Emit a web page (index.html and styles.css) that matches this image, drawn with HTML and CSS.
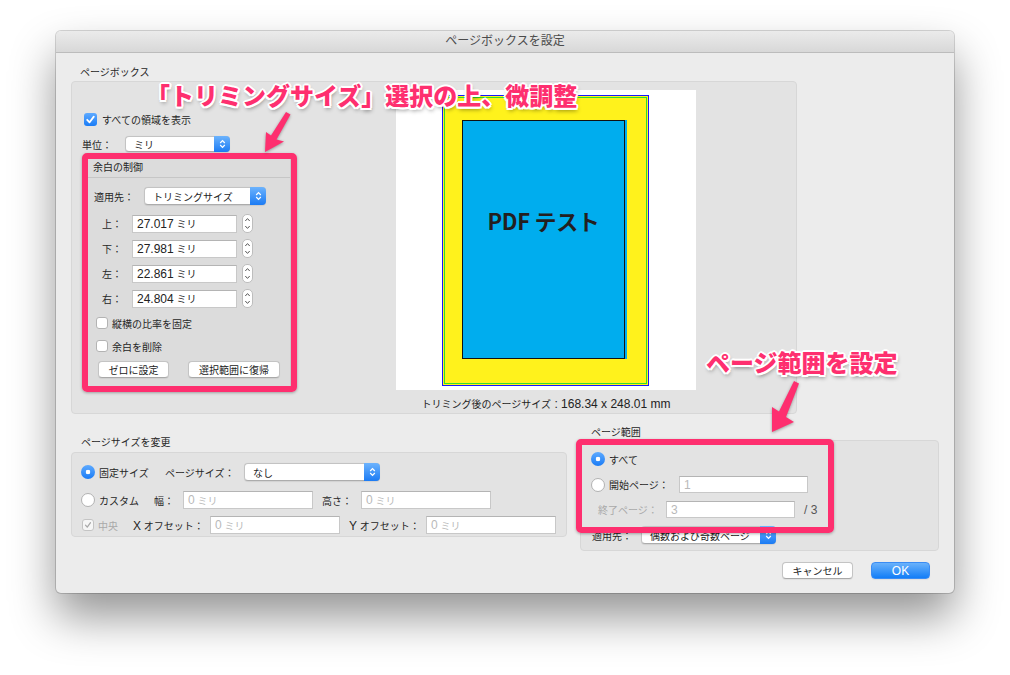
FILE: index.html
```html
<!DOCTYPE html>
<html lang="ja">
<head>
<meta charset="utf-8">
<title>ページボックスを設定</title>
<link rel="stylesheet" href="styles.css">
</head>
<body>
<div class="stage">
  <div class="window">
    <div class="titlebar">ページボックスを設定</div>
    <div class="content">
      <div class="label pb-label">ページボックス</div>
      <div class="group g1">
        <div class="leftcol">
          <div class="row chk-row"><span class="cb on"><svg width="13" height="13" viewBox="0 0 13 13"><path d="M3.2 6.8 L5.6 9.3 L9.8 3.6" fill="none" stroke="#fff" stroke-width="1.8" stroke-linecap="round" stroke-linejoin="round"/></svg></span>すべての領域を表示</div>
          <div class="row unit-row"><span class="lbl-unit">単位：</span><div class="popup pop-unit"><span>ミリ</span><span class="arr"><svg width="7" height="10" viewBox="0 0 7 10"><path d="M1.2 4 L3.5 1.6 L5.8 4 M1.2 6 L3.5 8.4 L5.8 6" fill="none" stroke="#fff" stroke-width="1.2"/></svg></span></div></div>
          <div class="margin-box">
            <div class="mb-head">余白の制御</div>
            <div class="row apply-row"><span class="lbl-apply">適用先：</span><div class="popup pop-apply"><span>トリミングサイズ</span><span class="arr"><svg width="7" height="10" viewBox="0 0 7 10"><path d="M1.2 4 L3.5 1.6 L5.8 4 M1.2 6 L3.5 8.4 L5.8 6" fill="none" stroke="#fff" stroke-width="1.2"/></svg></span></div></div>
            <div class="row frow first"><span class="lbl-f">上：</span><div class="field fw105"><span class="n">27.017</span>&nbsp;ミリ</div><span class="stepper"><svg width="7" height="15" viewBox="0 0 7 15"><path d="M1.3 5 L3.5 2.6 L5.7 5 M1.3 10 L3.5 12.4 L5.7 10" fill="none" stroke="#555" stroke-width="1"/></svg></span></div>
            <div class="row frow"><span class="lbl-f">下：</span><div class="field fw105"><span class="n">27.981</span>&nbsp;ミリ</div><span class="stepper"><svg width="7" height="15" viewBox="0 0 7 15"><path d="M1.3 5 L3.5 2.6 L5.7 5 M1.3 10 L3.5 12.4 L5.7 10" fill="none" stroke="#555" stroke-width="1"/></svg></span></div>
            <div class="row frow"><span class="lbl-f">左：</span><div class="field fw105"><span class="n">22.861</span>&nbsp;ミリ</div><span class="stepper"><svg width="7" height="15" viewBox="0 0 7 15"><path d="M1.3 5 L3.5 2.6 L5.7 5 M1.3 10 L3.5 12.4 L5.7 10" fill="none" stroke="#555" stroke-width="1"/></svg></span></div>
            <div class="row frow"><span class="lbl-f">右：</span><div class="field fw105"><span class="n">24.804</span>&nbsp;ミリ</div><span class="stepper"><svg width="7" height="15" viewBox="0 0 7 15"><path d="M1.3 5 L3.5 2.6 L5.7 5 M1.3 10 L3.5 12.4 L5.7 10" fill="none" stroke="#555" stroke-width="1"/></svg></span></div>
            <div class="row cbrow first"><span class="cb off"></span>縦横の比率を固定</div>
            <div class="row cbrow"><span class="cb off"></span>余白を削除</div>
            <div class="row btnrow"><span class="btn b-zero">ゼロに設定</span><span class="btn b-restore">選択範囲に復帰</span></div>
          </div>
        </div>
        <div class="preview-col">
          <div class="preview">
            <div class="bleed"><div class="trimline"><div class="page">PDF テスト</div></div></div>
          </div>
          <div class="caption">トリミング後のページサイズ<span class="n"> : 168.34 x 248.01 mm</span></div>
        </div>
      </div>

      <div class="bottom">
        <div class="bl">
          <div class="label bl-label">ページサイズを変更</div>
          <div class="group g2">
            <div class="row r1">
              <span class="radio on"></span><span class="t-fixed">固定サイズ</span><span class="t-psize">ページサイズ：</span>
              <div class="popup pop-size"><span>なし</span><span class="arr"><svg width="7" height="10" viewBox="0 0 7 10"><path d="M1.2 4 L3.5 1.6 L5.8 4 M1.2 6 L3.5 8.4 L5.8 6" fill="none" stroke="#fff" stroke-width="1.2"/></svg></span></div>
            </div>
            <div class="row r2">
              <span class="radio off"></span><span class="t-custom">カスタム</span><span class="t-w">幅：</span><div class="field fw130 ph"><span class="n">0</span>&nbsp;ミリ</div>
              <span class="t-h">高さ：</span><div class="field fw130 ph"><span class="n">0</span>&nbsp;ミリ</div>
            </div>
            <div class="row r3">
              <span class="cb dis"><svg width="12" height="12" viewBox="0 0 12 12"><path d="M3 6.2 L5.1 8.6 L9 3.2" fill="none" stroke="#a8a8a8" stroke-width="1.5" stroke-linecap="round" stroke-linejoin="round"/></svg></span><span class="t-center">中央</span><span class="t-xo"><span class="n">X</span> オフセット：</span><div class="field fw130 ph"><span class="n">0</span>&nbsp;ミリ</div>
              <span class="t-yo"><span class="n">Y</span> オフセット：</span><div class="field fw130 ph"><span class="n">0</span>&nbsp;ミリ</div>
            </div>
          </div>
        </div>
        <div class="br">
          <div class="label br-label">ページ範囲</div>
          <div class="group g3">
            <div class="row q1"><span class="radio on"></span><span>すべて</span></div>
            <div class="row q2"><span class="radio off"></span><span class="t-start">開始ページ：</span><div class="field fw129 ph"><span class="n">1</span></div></div>
            <div class="row q3"><span class="t-end">終了ページ：</span><div class="field fw129 ph"><span class="n">3</span></div><span class="n total">/ 3</span></div>
            <div class="row q4"><span class="t-apply2">適用先：</span><div class="popup pop-range"><span>偶数および奇数ページ</span><span class="arr"><svg width="7" height="10" viewBox="0 0 7 10"><path d="M1.2 4 L3.5 1.6 L5.8 4 M1.2 6 L3.5 8.4 L5.8 6" fill="none" stroke="#fff" stroke-width="1.2"/></svg></span></div></div>
          </div>
        </div>
      </div>

      <div class="buttons">
        <span class="btn b-cancel">キャンセル</span>
        <span class="btn b-ok"><span class="n">OK</span></span>
      </div>
    </div>
  </div>

  <div class="hl hl-left"></div>
  <div class="hl hl-right"></div>
  <svg class="arrows" width="1010" height="675" viewBox="0 0 1010 675">
    <polygon points="265,152 266,132 271,135.5 286,112 290.5,114.5 276.5,139.5 284,141.5" fill="#fe2f6f"/>
    <polygon points="772,432 772,407 779,411.5 794,381 799,383.5 786,417 794,422" fill="#fe2f6f"/>
  </svg>
  <div class="ann ann1">「トリミングサイズ」選択の上、微調整</div>
  <div class="ann ann2">ページ範囲を設定</div>
</div>
</body>
</html>
```
FILE: styles.css
```css
* { box-sizing: border-box; }
html, body { margin: 0; padding: 0; background: #fff; }
body {
  font-family: "Liberation Sans", "Noto Sans CJK JP", sans-serif;
  font-size: 10px;
  color: #262626;
}
.n { font-size: 12px; }

.stage {
  position: relative;
  width: 1010px;
  height: 675px;
  padding: 31px 0 0 56px;
  overflow: hidden;
}
.window {
  width: 898px;
  height: 562px;
  background: #ececec;
  border-radius: 5px;
  box-shadow: 0 0 0 1px rgba(0,0,0,0.16), 0 24px 45px rgba(0,0,0,0.42);
  overflow: hidden;
}
.titlebar {
  height: 22px;
  line-height: 21px;
  text-align: center;
  font-size: 12px;
  color: #4b4b4b;
  background: linear-gradient(#ebebeb, #d8d8d8);
  border-bottom: 1px solid #bcbcbc;
}
.content { padding: 0 15px; }
.label { height: 14px; line-height: 14px; }
.pb-label { margin: 13px 0 1px 9px; }

.group {
  background: #e3e3e3;
  border: 1px solid #d7d7d7;
  border-radius: 4px;
}
.row { display: flex; align-items: center; }

/* ---------- page box group ---------- */
.g1 { width: 726px; height: 333px; display: flex; }
.leftcol { width: 225px; flex: none; padding: 29px 0 0 10px; }
.chk-row { height: 16px; }
.chk-row .cb { margin-left: 2px; margin-right: 5px; }
.unit-row { height: 16px; margin-top: 9px; }
.lbl-unit { width: 43px; }

.cb { flex: none; display: flex; align-items: center; justify-content: center; border-radius: 3px; }
.cb.on { width: 13px; height: 13px; background: linear-gradient(#5eaaff, #1a7cf6); }
.cb.off { width: 12px; height: 12px; background: #fff; border: 1px solid #b3b3b3; margin-right: 4px; }
.cb.dis { width: 12px; height: 12px; background: #f6f6f6; border: 1px solid #c4c4c4; margin-left: 1px; }

.popup {
  flex: none;
  display: flex;
  align-items: center;
  background: #fff;
  border: 1px solid #c3c3c3;
  border-bottom-color: #acacac;
  border-radius: 4px;
  padding-left: 8px;
  box-shadow: 0 0.5px 1px rgba(0,0,0,0.08);
  color: #222;
}
.popup .arr {
  margin: -1px -1px -1px auto;
  width: 16px;
  align-self: stretch;
  background: linear-gradient(#6cb3fd, #1b7bf4);
  border-radius: 0 4px 4px 0;
  display: flex;
  align-items: center;
  justify-content: center;
}
.pop-unit { width: 105px; height: 16px; }
.pop-apply { width: 122px; height: 18px; }
.pop-size { width: 136px; height: 18px; }
.pop-range { width: 135px; height: 18px; }

.margin-box {
  margin: 6px 0 0 5px;
  width: 204px;
  height: 229px;
  background: #dcdcdc;
  border: 1px solid #c9c9c9;
}
.mb-head {
  height: 19px;
  line-height: 18px;
  padding-left: 5px;
  border-bottom: 1px solid #c6c6c6;
}
.apply-row { height: 18px; margin-top: 9px; padding-left: 6px; }
.lbl-apply { width: 50px; }
.frow { height: 19px; margin-top: 6px; padding-left: 14px; }
.frow.first { margin-top: 9px; }
.lbl-f { width: 30px; }

.field {
  flex: none;
  height: 18px;
  display: flex;
  align-items: center;
  background: #fff;
  border: 1px solid #c8c8c8;
  border-top-color: #b4b4b4;
  padding-left: 4px;
  color: #222;
}
.field.ph { color: #b9b9b9; }
.fw105 { width: 105px; }
.fw130 { width: 130px; }
.fw129 { width: 129px; height: 17px; }

.stepper {
  flex: none;
  margin-left: 5px;
  width: 11px;
  height: 19px;
  background: #fff;
  border: 1px solid #bdbdbd;
  border-radius: 5px;
  display: flex;
  align-items: center;
  justify-content: center;
}
.cbrow { height: 16px; margin-top: 7px; padding-left: 8px; }
.cbrow.first { margin-top: 7px; }
.btnrow { height: 17px; margin-top: 7px; padding-left: 10px; }

.btn {
  flex: none;
  display: flex;
  align-items: center;
  justify-content: center;
  height: 17px;
  background: #fff;
  border: 1px solid #c4c4c4;
  border-bottom-color: #a9a9a9;
  border-radius: 4px;
  box-shadow: 0 0.5px 1px rgba(0,0,0,0.06);
  color: #222;
}
.b-zero { width: 71px; }
.b-restore { width: 92px; margin-left: 19px; }

/* ---------- preview ---------- */
.preview-col { width: 300px; flex: none; margin-left: 99px; padding-top: 8px; }
.preview { width: 300px; height: 300px; background: #fff; padding: 5px 0 0 46px; }
.bleed {
  width: 207px;
  height: 291px;
  border: 1px solid #1515ff;
  background: #fff21c;
  padding: 1px;
}
.trimline {
  width: 100%;
  height: 100%;
  border: 1px solid #2ee02e;
  padding: 22px 0 0 17px;
}
.page {
  width: 163px;
  height: 239px;
  background: #00adee;
  border: 1px solid #111;
  box-shadow: 2px 0 0 #00adee;
  padding-top: 86px;
  text-align: center;
  font-family: "Noto Sans CJK JP", sans-serif;
  font-weight: 700;
  font-size: 22px;
  line-height: 26px;
  letter-spacing: -0.3px;
  color: #231f20;
}
.caption { margin-top: 7px; text-align: center; line-height: 14px; height: 14px; color: #222; }

/* ---------- bottom groups ---------- */
.bottom { display: flex; align-items: flex-start; }
.bl { margin-top: 22px; }
.bl-label { padding-left: 10px; }
.g2 { margin-top: 2px; width: 496px; height: 85px; padding: 10px 0 0 9px; }
.r1 { height: 18px; }
.r2 { height: 18px; margin-top: 10px; }
.r3 { height: 18px; margin-top: 7px; }
.radio { flex: none; width: 14px; height: 14px; border-radius: 50%; margin-right: 4px; }
.radio.on {
  background: radial-gradient(circle, #fff 0 2px, rgba(255,255,255,0) 2.6px), linear-gradient(#5eaaff, #1a7cf6);
}
.radio.off { background: #fff; border: 1px solid #b2b2b2; }
.t-fixed { width: 66px; }
.t-psize { width: 79px; }
.t-custom { width: 55px; }
.t-w { width: 29px; }
.t-h { width: 39px; margin-left: 9px; }
.t-center { width: 35px; margin-left: 4px; color: #a9a9a9; }
.t-xo { width: 77px; }
.t-yo { width: 77px; margin-left: 9px; }

.br { margin: 12px 0 0 13px; }
.br-label { padding-left: 11px; }
.g3 { width: 359px; height: 111px; padding: 11px 0 0 10px; }
.q1 { height: 14px; }
.q2 { height: 17px; margin-top: 10px; }
.q3 { height: 17px; margin-top: 8px; }
.q4 { height: 18px; margin-top: 8px; }
.t-start { width: 70px; }
.t-end { width: 68px; margin-left: 7px; color: #a9a9a9; }
.total { margin-left: 9px; color: #555; }
.t-apply2 { width: 49px; margin-left: 1px; }

.buttons {
  display: flex;
  justify-content: flex-end;
  margin-top: 11px;
  padding-right: 9px;
}
.b-cancel { width: 71px; }
.b-ok {
  width: 59px;
  margin-left: 18px;
  color: #fff;
  background: linear-gradient(#6ab2fb, #127df7);
  border: 1px solid #3a8cf4;
}

/* ---------- annotations (overlay) ---------- */
.hl {
  position: absolute;
  border: 6px solid #fe2f6f;
  border-radius: 5px;
  box-shadow: 0 1px 3px rgba(0,0,0,0.3);
}
.hl-left { left: 82px; top: 153px; width: 215px; height: 239px; }
.hl-right { left: 576px; top: 439px; width: 258px; height: 94px; }
.arrows {
  position: absolute;
  left: 0;
  top: 0;
  pointer-events: none;
  filter: drop-shadow(0 1px 1.5px rgba(0,0,0,0.35));
}
.ann {
  position: absolute;
  font-family: "Noto Sans CJK JP", sans-serif;
  font-weight: 900;
  font-size: 24px;
  line-height: 24px;
  color: #fe2f6f;
  white-space: nowrap;
  text-shadow:
    2px 0 #fff, -2px 0 #fff, 0 2px #fff, 0 -2px #fff,
    1.5px 1.5px #fff, -1.5px -1.5px #fff, 1.5px -1.5px #fff, -1.5px 1.5px #fff,
    1px 3px 4px rgba(0,0,0,0.45);
}
.ann1 { left: 146px; top: 83px; }
.ann2 { left: 706px; top: 350px; }
```
